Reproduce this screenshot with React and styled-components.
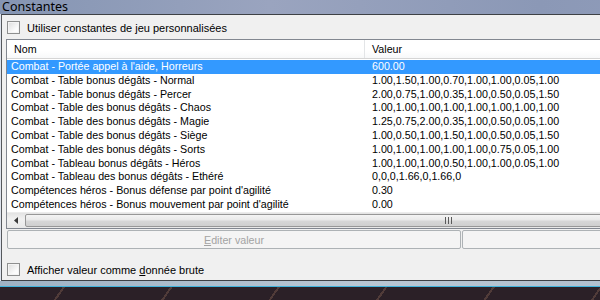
import React from "react";
import styled, { createGlobalStyle } from "styled-components";

const GlobalStyle = createGlobalStyle`
  html, body {
    margin: 0;
    padding: 0;
    background: #2b2027;
    overflow: hidden;
  }
`;

const Screen = styled.div`
  width: 600px;
  height: 300px;
  overflow: hidden;
  display: flex;
  flex-direction: column;
  font-family: "Liberation Sans", Arial, sans-serif;
  background:
    repeating-linear-gradient(
      125deg,
      transparent 0 40px,
      rgba(150, 110, 90, 0.35) 40px 42px,
      transparent 42px 88px
    ),
    #2b2027;
`;

const Window = styled.div`
  width: 900px;
  display: flex;
  flex-direction: column;
  background: linear-gradient(90deg, #8595b3, #9aa4bf 30%, #8b98b6 60%, #98a3c0);
`;

const TitleBar = styled.div`
  height: 14px;
  overflow: hidden;
  padding-left: 2px;
  display: flex;
  align-items: flex-end;
`;

const TitleText = styled.span`
  font-family: "Noto Sans", "Open Sans", sans-serif;
  font-size: 12.5px;
  line-height: 14px;
  color: #000;
  margin-bottom: 0;
`;

const FrameBody = styled.div`
  padding-left: 1px;
  background: #dfe4ee;
`;

const Client = styled.div`
  background: #f0f0f0;
  border-top: 1px solid #3e4145;
  border-left: 1px solid #55585c;
  border-bottom: 1px solid #3e4145;
  padding: 6px 0 4px 4px;
  display: flex;
  flex-direction: column;
`;

const CheckRow = styled.label`
  display: flex;
  align-items: center;
  gap: 7px;
  height: 13px;
  margin-left: 1px;
  font-size: 11px;
  color: #000;
`;

const Box = styled.span`
  width: 11px;
  height: 11px;
  border: 1px solid #8e8f8f;
  background: linear-gradient(135deg, #dcdcdc, #fcfcfc 70%);
  box-shadow: inset 0 0 0 1px #f4f4f4;
`;

const Mnemonic = styled.span`
  text-decoration: underline;
`;

const ListView = styled.div`
  margin-top: 5px;
  border: 1px solid #828790;
  background: #fff;
  display: flex;
  flex-direction: column;
  height: 188px;
`;

const Header = styled.div`
  display: flex;
  height: 18px;
  flex: none;
  border-bottom: 1px solid #d5d5d5;
  background: linear-gradient(#ffffff, #ffffff 60%, #f7f8f9);
`;

const HeaderCell = styled.div`
  width: ${(p) => p.$w}px;
  flex: none;
  box-sizing: border-box;
  padding-left: 7px;
  display: flex;
  align-items: center;
  font-size: 10.7px;
  color: #000;
  border-right: 1px solid #e3e5e7;
`;

const Rows = styled.div`
  flex: 1;
  overflow: hidden;
  padding-top: 1px;
`;

const Row = styled.div`
  display: flex;
  height: 13.8px;
  align-items: center;
  font-size: 10.7px;
  line-height: 13.8px;
  white-space: nowrap;
  color: ${(p) => (p.$selected ? "#fff" : "#000")};
  background: ${(p) => (p.$selected ? "#3399ff" : "transparent")};
`;

const Cell = styled.div`
  width: ${(p) => p.$w}px;
  flex: none;
  padding-left: ${(p) => p.$pad}px;
  box-sizing: border-box;
  overflow: hidden;
`;

const HScroll = styled.div`
  height: 15px;
  flex: none;
  display: flex;
  align-items: center;
  background: linear-gradient(#e3e3e3, #f1f1f1 40%, #e8e8e8);
  border-top: 1px solid #ececec;
`;

const ArrowBtn = styled.div`
  width: 17px;
  height: 15px;
  display: flex;
  align-items: center;
  justify-content: center;
  flex: none;
`;

const Thumb = styled.div`
  width: 848px;
  height: 13px;
  margin-left: 1px;
  box-sizing: border-box;
  border: 1px solid #979797;
  border-radius: 2px;
  background: linear-gradient(#f4f4f4, #e9e9e9 45%, #d7d7d7 55%, #cfcfcf);
  display: flex;
  align-items: center;
  justify-content: center;
`;

const ButtonRow = styled.div`
  display: flex;
  margin-top: 1px;
  margin-left: 1px;
`;

const DisabledButton = styled.div`
  width: ${(p) => p.$w}px;
  height: 19px;
  flex: none;
  box-sizing: border-box;
  border: 1px solid #adb2b5;
  border-radius: 2px;
  background: #f4f4f4;
  color: #a3a3a3;
  font-size: 10.7px;
  display: flex;
  align-items: center;
  justify-content: center;
  margin-right: 1px;
`;

const BottomCheck = styled(CheckRow)`
  margin-top: 14px;
`;

const BottomFrame = styled.div`
  height: 5px;
  background: linear-gradient(90deg, #9fb2c4, #b9c7d4 40%, #a9b8c8);
  border-bottom: 1px solid #3fb3dc;
`;

const rows = [
  ["Combat - Portée appel à l'aide, Horreurs", "600.00"],
  ["Combat - Table bonus dégâts - Normal", "1.00,1.50,1.00,0.70,1.00,1.00,0.05,1.00"],
  ["Combat - Table bonus dégâts - Percer", "2.00,0.75,1.00,0.35,1.00,0.50,0.05,1.50"],
  ["Combat - Table des bonus dégâts - Chaos", "1.00,1.00,1.00,1.00,1.00,1.00,1.00,1.00"],
  ["Combat - Table des bonus dégâts - Magie", "1.25,0.75,2.00,0.35,1.00,0.50,0.05,1.00"],
  ["Combat - Table des bonus dégâts - Siège", "1.00,0.50,1.00,1.50,1.00,0.50,0.05,1.50"],
  ["Combat - Table des bonus dégâts - Sorts", "1.00,1.00,1.00,1.00,1.00,0.75,0.05,1.00"],
  ["Combat - Tableau bonus dégâts - Héros", "1.00,1.00,1.00,0.50,1.00,1.00,0.05,1.00"],
  ["Combat - Tableau des bonus dégâts - Ethéré", "0,0,0,1.66,0,1.66,0"],
  ["Compétences héros - Bonus défense par point d'agilité", "0.30"],
  ["Compétences héros - Bonus mouvement par point d'agilité", "0.00"],
];

const NAME_W = 358;
const VAL_W = 530;

const App = () => {
  return (
    <Screen>
      <GlobalStyle />
      <Window>
        <TitleBar>
          <TitleText>Constantes</TitleText>
        </TitleBar>
        <FrameBody>
          <Client>
            <CheckRow>
              <Box />
              Utiliser constantes de jeu personnalisées
            </CheckRow>
            <ListView>
              <Header>
                <HeaderCell $w={NAME_W}>Nom</HeaderCell>
                <HeaderCell $w={VAL_W}>Valeur</HeaderCell>
              </Header>
              <Rows>
                {rows.map(([name, value], i) => (
                  <Row key={name} $selected={i === 0}>
                    <Cell $w={NAME_W} $pad={4}>{name}</Cell>
                    <Cell $w={VAL_W} $pad={7}>{value}</Cell>
                  </Row>
                ))}
              </Rows>
              <HScroll>
                <ArrowBtn>
                  <svg width="4" height="7" viewBox="0 0 4 7">
                    <path d="M4 0 L0 3.5 L4 7 Z" fill="#3a3a3a" />
                  </svg>
                </ArrowBtn>
                <Thumb>
                  <svg width="8" height="7" viewBox="0 0 8 7">
                    <path d="M0.5 0v7M3.5 0v7M6.5 0v7" stroke="#5a5a5a" strokeWidth="1" />
                  </svg>
                </Thumb>
              </HScroll>
            </ListView>
            <ButtonRow>
              <DisabledButton $w={454}>
                <span>
                  <Mnemonic>E</Mnemonic>diter valeur
                </span>
              </DisabledButton>
              <DisabledButton $w={420} />
            </ButtonRow>
            <BottomCheck>
              <Box />
              <span>
                Afficher valeur comme <Mnemonic>d</Mnemonic>onnée brute
              </span>
            </BottomCheck>
          </Client>
        </FrameBody>
        <BottomFrame />
      </Window>
    </Screen>
  );
};

export default App;
